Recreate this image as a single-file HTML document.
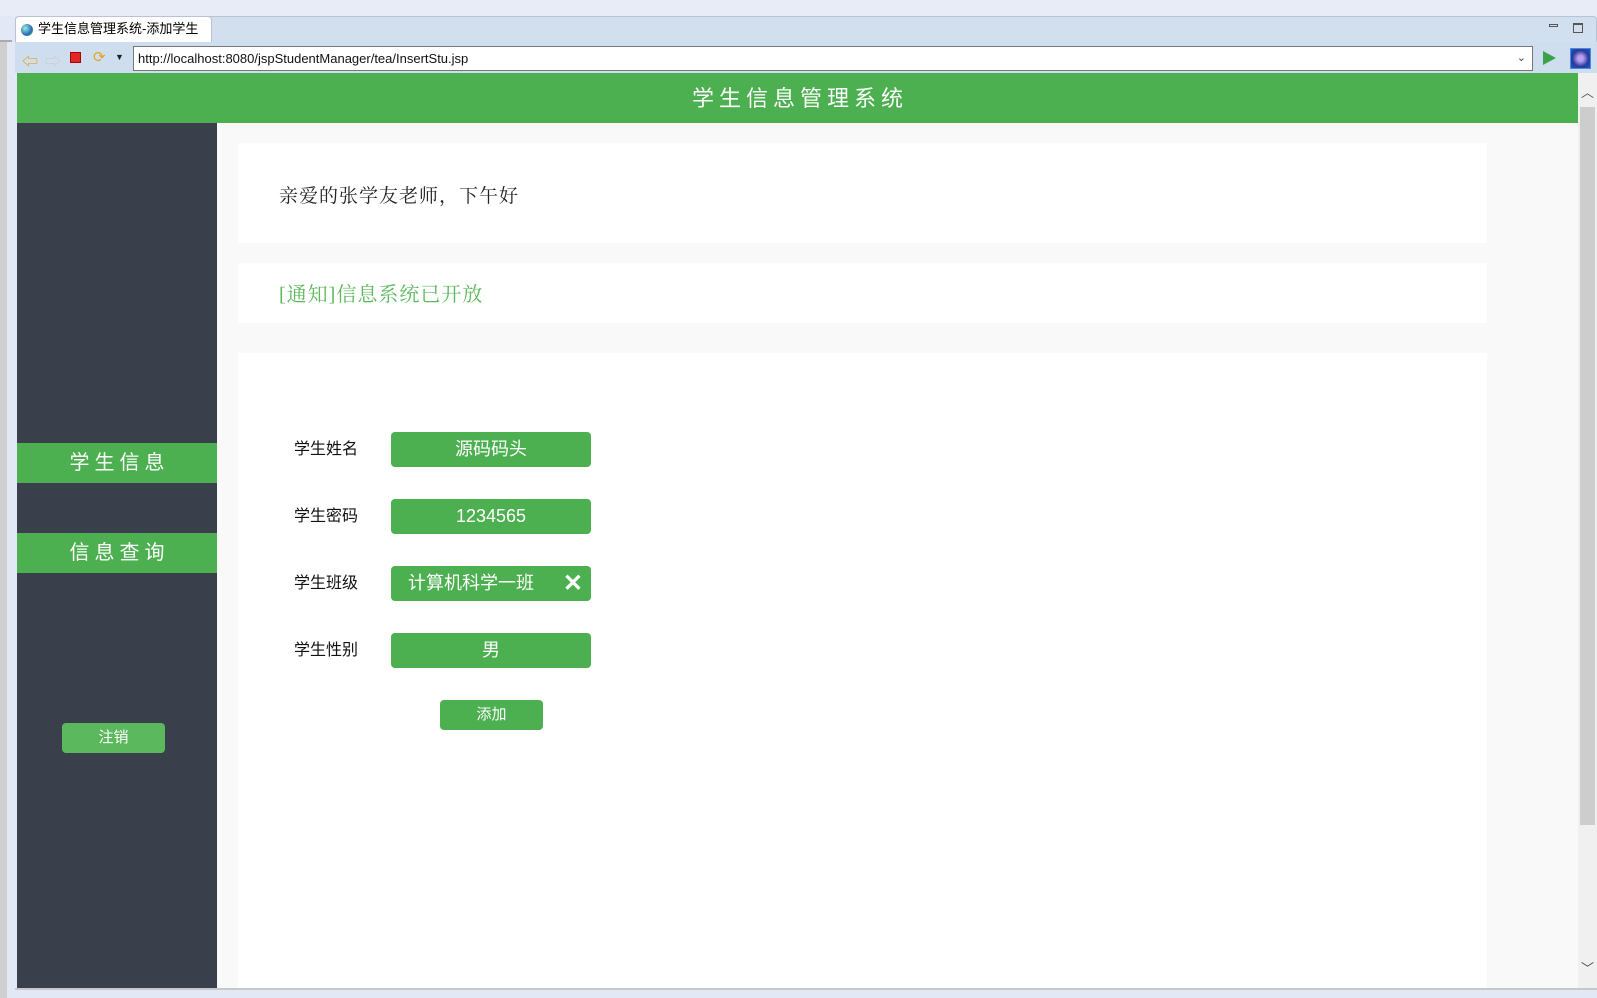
<!DOCTYPE html>
<html><head><meta charset="utf-8"><style>
*{margin:0;padding:0;box-sizing:border-box}
body{width:1597px;height:998px;background:#e3e8f6;position:relative;overflow:hidden;font-family:"Liberation Sans","Microsoft YaHei","Noto Sans CJK SC",sans-serif}
.a{position:absolute}
.inp{position:absolute;left:391px;width:200px;height:35px;background:#4caf50;border-radius:4px;color:#fff;font-size:18px;text-align:center;line-height:35px}
.lbl{position:absolute;left:294px;font-size:16px;color:#111;line-height:35px}
</style></head><body>
<div class="a" style="left:0;top:0;width:1597px;height:16px;background:#e8ecf7"></div>
<div class="a" style="left:0;top:40px;width:7px;height:958px;background:#cfcfcf"></div>
<div class="a" style="left:0;top:40px;width:12px;height:2px;background:#aaa"></div>
<div class="a" style="left:15px;top:16px;width:1582px;height:26px;background:#d1dfee;border:1px solid #b8c4d4;border-bottom:none;border-radius:4px 4px 0 0"></div>
<div class="a" style="left:15px;top:16px;width:197px;height:26px;background:#fff;border:1px solid #b8c4d4;border-bottom:none;border-radius:4px 4px 0 0;font-size:13px;line-height:24px;padding-left:22px">学生信息管理系统-添加学生 <span style="color:#999;font-size:11px;margin-left:4px">✕</span></div>
<div class="a" style="left:21px;top:24px;width:12px;height:12px;border-radius:50%;background:radial-gradient(circle at 35% 35%,#9ed,#2a6ab8 60%,#3a7 80%)"></div>
<div class="a" style="left:1549px;top:24px;width:9px;height:3px;border:1px solid #555"></div>
<div class="a" style="left:1573px;top:23px;width:10px;height:10px;border:1px solid #555;border-top-width:2px"></div>
<div class="a" style="left:15px;top:42px;width:1582px;height:31px;background:#cedeef"></div>
<div class="a" style="left:22px;top:48px;font-size:16px;color:#e6a31d">⇦</div>
<div class="a" style="left:45px;top:48px;font-size:16px;color:#ccc">⇨</div>
<div class="a" style="left:70px;top:52px;width:11px;height:11px;background:#e02828;border:1px solid #a00"></div>
<div class="a" style="left:93px;top:48px;font-size:15px;color:#e6a31d">⟳</div>
<div class="a" style="left:115px;top:52px;font-size:9px;color:#222">▼</div>
<div class="a" style="left:133px;top:46px;width:1400px;height:25px;background:#fff;border:1px solid #777;font-size:13px;line-height:23px;padding-left:4px;color:#111">http://localhost:8080/jspStudentManager/tea/InsertStu.jsp<span style="position:absolute;right:6px;color:#444;font-size:11px">⌄</span></div>
<div class="a" style="left:1543px;top:51px;width:0;height:0;border-left:13px solid #3aa34a;border-top:7px solid transparent;border-bottom:7px solid transparent"></div>
<div class="a" style="left:1570px;top:48px;width:21px;height:21px;background:radial-gradient(circle,#b9a0f0 20%,#2a3a9a 60%,#1a5ac8);border:1px solid #4a8ae0"></div>
<div class="a" style="left:17px;top:73px;width:1561px;height:915px;background:#f9f9f9"></div>
<div class="a" style="left:17px;top:73px;width:1561px;height:50px;background:#4caf50;color:#fff;font-size:22px;text-align:center;line-height:52px;letter-spacing:5px;padding-left:5px">学生信息管理系统</div>
<div class="a" style="left:17px;top:123px;width:200px;height:865px;background:#3a3f4c"></div>
<div class="a" style="left:17px;top:443px;width:200px;height:40px;background:#4caf50;color:#fff;font-size:20px;text-align:center;line-height:40px;letter-spacing:5px;padding-left:5px">学生信息</div>
<div class="a" style="left:17px;top:533px;width:200px;height:40px;background:#4caf50;color:#fff;font-size:20px;text-align:center;line-height:40px;letter-spacing:5px;padding-left:5px">信息查询</div>
<div class="a" style="left:62px;top:723px;width:103px;height:30px;background:#5cb85c;border-radius:4px;color:#fff;font-size:15px;text-align:center;line-height:30px">注销</div>
<div class="a" style="left:1578px;top:73px;width:19px;height:915px;background:#f0f0f0"></div>
<div class="a" style="left:1580px;top:107px;width:15px;height:718px;background:#cdcdcd"></div>
<div class="a" style="left:1581px;top:82px;font-size:13px;color:#555">︿</div>
<div class="a" style="left:1581px;top:958px;font-size:13px;color:#555">﹀</div>
<div class="a" style="left:238px;top:143px;width:1249px;height:100px;background:#fff"></div>
<div class="a" style="left:279px;top:181px;font-size:19px;color:#222;font-family:'Liberation Serif','Noto Serif CJK SC',serif;letter-spacing:1px">亲爱的张学友老师，下午好</div>
<div class="a" style="left:238px;top:263px;width:1249px;height:60px;background:#fff"></div>
<div class="a" style="left:279px;top:278px;font-size:20px;color:#5cb85c;font-family:'Liberation Serif','Noto Serif CJK SC',serif;letter-spacing:1px">[通知]信息系统已开放</div>
<div class="a" style="left:238px;top:353px;width:1249px;height:635px;background:#fff"></div>
<div class="lbl" style="top:432px">学生姓名</div><div class="inp" style="top:432px">源码码头</div>
<div class="lbl" style="top:499px">学生密码</div><div class="inp" style="top:499px">1234565</div>
<div class="lbl" style="top:566px">学生班级</div><div class="inp" style="top:566px;text-align:left;padding-left:17px">计算机科学一班<span style="position:absolute;right:8px;top:0;font-size:24px;font-weight:bold">✕</span></div>
<div class="lbl" style="top:633px">学生性别</div><div class="inp" style="top:633px">男</div>
<div class="a" style="left:440px;top:700px;width:103px;height:30px;background:#4caf50;border-radius:4px;color:#fff;font-size:15px;text-align:center;line-height:30px">添加</div>
<div class="a" style="left:15px;top:988px;width:1582px;height:2px;background:#c8c8c8"></div>
</body></html>
